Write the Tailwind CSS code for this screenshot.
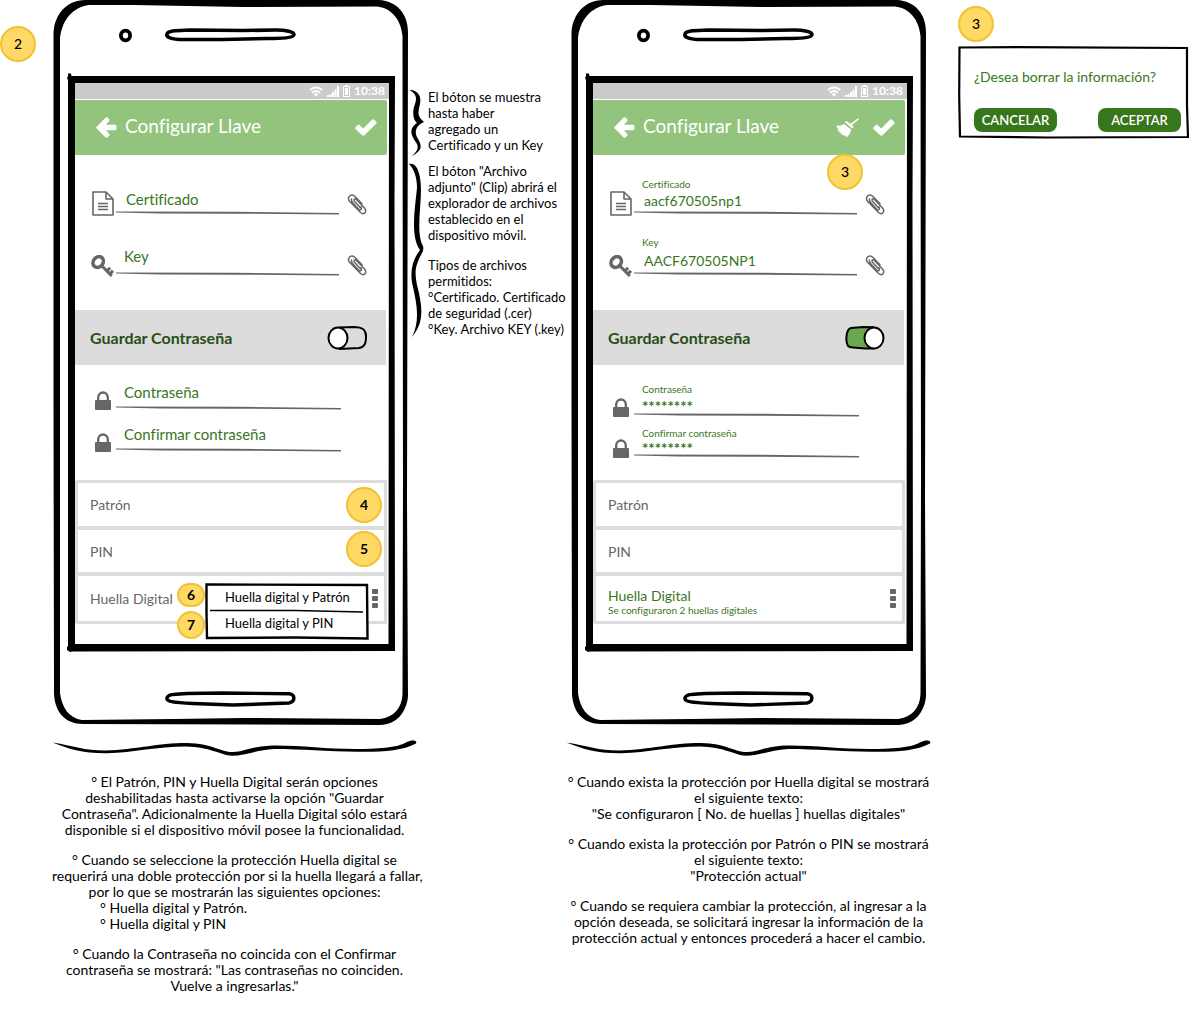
<!DOCTYPE html>
<html lang="es">
<head>
<meta charset="utf-8">
<meta name="viewport" content="width=device-width, initial-scale=1">
<title>Configurar Llave</title>
<script src="https://cdn.jsdelivr.net/npm/@tailwindcss/browser@4"></script>
</head>
<body class="bg-white font-['Lato',sans-serif] text-black [font-variant-ligatures:none]">

<!-- Shared drawings -->
<svg class="hidden" aria-hidden="true">
  <symbol id="frame" viewBox="0 0 356 726">
    <path fill="#000" fill-rule="evenodd" d="M0.500,32 C2,14 14,0 32,0 L326,0 C344,1 355,14 355,32 L354,500 L355,696 C354,711 344,725 327,725 L30,724 C12,724 2,712 1,694 L0.500,400 Z M7,38 L7,693 C9,708 16,718 29,720 L120,719 L190,718 L327,719 C341,717 349,708 349.500,694 L350,480 L349.500,36 C348,19 338,8 324,6.500 L190,7 L80,5 L36,5 C20,7 9,20 7,38 Z"/>
    <ellipse cx="72.500" cy="35.500" rx="4.600" ry="4.800" fill="none" stroke="#000" stroke-width="3.800"/>
    <path fill="none" stroke="#000" stroke-width="3.600" d="M114,34 C115,30 126,30.500 138,30 L190,30.500 L223,30 C233,30 241,32 241,34.500 C241,38 228,38.500 215,38.500 L170,39.500 L130,39.500 C118,39.500 113,37 114,34 Z"/>
    <path fill="none" stroke="#000" stroke-width="3.400" d="M114,698 C115,693.500 122,694.500 134,693.500 L170,693 L236,693.700 C243,695 242,702 236,703 L180,705 L140,703.500 C122,702.500 113,702 114,698 Z"/>
    <path fill="#000" fill-rule="evenodd" d="M14,78 L15,76 L15,73.500 L18,73.500 L18.500,76 L342,76 L342,79 L341.500,200 L342,651 L19,651.500 L17,652 L14,650 L14,647 L15,646 L15,80 Z M22,83 L22,644 L335.500,644 L336,83 Z"/>
  </symbol>
  <symbol id="brace-wide" viewBox="0 0 365 18">
    <path d="M0.500,2.500 C22,6 32,10.500 53,10.500 C85,9.500 105,3 135,3 C160,3.500 168,12 181,12 C193,12 200,5.500 224,5.500 C250,5.500 275,9 303,9 C325,9 345,8 355,2 C359,-0.500 366,0 364,3.500 C350,11 330,12 305,11.700 C275,11.700 250,9 222,9 C205,10 192,15.800 180,15.800 C168,15 158,6.800 134,6.500 C105,6.500 82,12.500 55,13.300 C30,13.500 17,9 0.500,2.500 Z"/>
  </symbol>
  <symbol id="line" viewBox="0 0 224 4" preserveAspectRatio="none">
    <path fill="#666" d="M0,0.500 L120,0.700 L224,2 L224,3.400 L120,2.700 L45,2.400 L0,1.500 Z"/>
  </symbol>
  <symbol id="wifi" viewBox="0 0 14 11">
    <path fill="none" stroke="#fff" stroke-width="2" d="M0.800,4 Q7,-1 13.200,4 M3,6.600 Q7,3.400 11,6.600"/><path fill="#fff" d="M4.600,8 Q7,6.200 9.400,8 L7,10.800 Z"/>
  </symbol>
  <symbol id="signal" viewBox="0 0 12 11">
    <path fill="#fff" d="M0,9h2v2H0z M2.500,8h2v3h-2z M5,6h2v5H5z M7.500,3.500h2v7.500h-2z M10,0h2v11h-2z"/>
  </symbol>
  <symbol id="battery" viewBox="0 0 7 12">
    <path fill="#fff" fill-rule="evenodd" d="M2,0h3v1h2v11H0V1h2z M1,2v9h5V2z M2,3h3v7H2z"/>
  </symbol>
  <symbol id="back" viewBox="0 0 21 21">
    <path fill="#fff" d="M0.400,10 L9.700,0.600 Q10.600,-0.200 11.500,0.600 L13.200,2.300 Q14,3.200 13.200,4.200 L9.800,7.700 H19 Q20.500,7.700 20.500,9.200 V11.700 Q20.500,13.200 19,13.200 H9.800 L13.200,16.800 Q14,17.800 13.200,18.700 L11.500,20.400 Q10.600,21.200 9.700,20.400 L0.400,11.200 Q-0.100,10.600 0.400,10 Z"/>
  </symbol>
  <symbol id="check" viewBox="0 0 22 17">
    <path fill="#fff" d="M0.400,8.500 L2.800,5.900 Q3.600,5.300 4.400,5.900 L8.300,9.500 L17.200,0.600 Q18,0 18.800,0.600 L21.400,3 Q22,3.800 21.400,4.500 L9.200,16.400 Q8.400,17 7.600,16.400 L0.400,9.900 Q-0.100,9.200 0.400,8.500 Z"/>
  </symbol>
  <symbol id="broom" viewBox="0 0 23 19">
    <path fill="#fff" d="M22,0.200 L23,1.300 L15.800,7.200 L17.600,9 L16.300,10.600 L8.800,4.300 L10.300,3 L13.300,4.900 L14.300,6 Z M8,6 L15,11.600 C14.800,14.500 13,17 11.500,18.700 L9.800,18.800 L10.300,17.200 L8,18.300 L7.900,16.800 L5.500,16.900 L5.500,15.200 L3.200,14.800 L3.500,13.200 L1.500,12.200 L2.200,10.600 L0,8.200 L2,7.500 C4.500,8 6.500,7.300 8,6 Z"/>
  </symbol>
  <symbol id="doc" viewBox="0 0 22 25">
    <path fill="none" stroke="#666" stroke-width="1.600" stroke-linejoin="round" d="M1,1H14L21,8V24H1Z M14,1V8H21"/><path fill="none" stroke="#666" stroke-width="1.400" d="M6,12.500H16M6,15.500H16M6,18.500H16"/>
  </symbol>
  <symbol id="key" viewBox="0 0 23 22">
    <ellipse cx="7.200" cy="7" rx="4.800" ry="5.800" transform="rotate(40 7.200 7)" fill="none" stroke="#666" stroke-width="3.600"/><path fill="none" stroke="#666" stroke-width="3" d="M10.500,10.500 L20.800,21 M15.800,15.800 L19.200,12.800 M18.800,18.800 L22,15.800"/>
  </symbol>
  <symbol id="clip" viewBox="0 0 20 22">
    <path fill="none" stroke="#666" stroke-width="1.500" stroke-linecap="round" d="M13.200,13.500 L7.500,7.200 C6,5.500 8,4 9.500,5.500 L17.500,14 C20.500,17.500 17,21.500 13.500,18.500 L2.800,7.500 C-0.500,4 3.500,-1 7.500,2 L15,9.800 M4.500,5 C4,7 5,8 6,9 L11.500,15 C13,16.500 15.500,15.500 14,13"/>
  </symbol>
  <symbol id="lock" viewBox="0 0 16 19">
    <path fill="none" stroke="#666" stroke-width="2.300" d="M3.200,10V6.500C3.200,-0.200 12.800,-0.200 12.800,6.500V10"/><rect y="9" width="16" height="10" rx="1" fill="#666"/>
  </symbol>
  <symbol id="dots" viewBox="0 0 6 19">
    <path fill="#666" d="M1,0h4a1,1 0 0 1 1,1v3a1,1 0 0 1-1,1H1a1,1 0 0 1-1-1V1a1,1 0 0 1 1-1z M1,7h4a1,1 0 0 1 1,1v3a1,1 0 0 1-1,1H1a1,1 0 0 1-1-1V8a1,1 0 0 1 1-1z M1,14h4a1,1 0 0 1 1,1v3a1,1 0 0 1-1,1H1a1,1 0 0 1-1-1v-3a1,1 0 0 1 1-1z"/>
  </symbol>
</svg>

<main class="grid grid-cols-[53px_356px_162px_356px_1fr] items-start">

  <div class="pt-[26px]">
    <span class="flex size-9 items-center justify-center rounded-full border-2 border-[#f1c232] bg-[#ffd966] text-sm font-medium">2</span>
  </div>

  <!-- Phone: empty form -->
  <section class="relative h-[726px] pt-[83px] pr-5 pl-[22px]">
    <svg class="pointer-events-none absolute inset-0 size-full" aria-hidden="true"><use href="#frame"/></svg>
    <div class="relative">
      <div class="flex h-4 items-center justify-end gap-1 bg-[#cbcbcb] pr-1 text-[12px] leading-4 font-bold text-white">
        <svg class="h-[11px] w-[14px]"><use href="#wifi"/></svg>
        <svg class="h-[11px] w-[12px]"><use href="#signal"/></svg>
        <svg class="h-[12px] w-[7px]"><use href="#battery"/></svg>
        <time>10:38</time>
      </div>
      <header class="mt-px mr-[2px] flex h-[55px] items-center rounded-r-xs bg-[#93c47d] pr-[10px] pl-[21px] text-white">
        <button aria-label="Volver"><svg class="size-[21px]"><use href="#back"/></svg></button>
        <h1 class="ml-2 flex-1 pb-1 text-[19px] leading-6">Configurar Llave</h1>
        <button aria-label="Guardar"><svg class="h-[17px] w-[22px]"><use href="#check"/></svg></button>
      </header>

      <div class="flex h-[61px] items-end pl-[17px]">
        <svg class="h-[25px] w-[22px]"><use href="#doc"/></svg>
        <div class="ml-[2px]">
          <input class="block h-6 w-[223px] pl-[10px] text-[15px] text-[#38761d] outline-none placeholder:text-[#38761d]" placeholder="Certificado" aria-label="Certificado">
          <svg class="mb-px h-1 w-[223px]"><use href="#line"/></svg>
        </div>
        <button class="ml-2" aria-label="Adjuntar certificado"><svg class="h-[22px] w-5"><use href="#clip"/></svg></button>
      </div>
      <div class="flex h-[61px] items-end pl-[16px]">
        <svg class="h-[22px] w-[23px]"><use href="#key"/></svg>
        <div class="ml-[2px]">
          <input class="mb-[4px] block h-6 w-[223px] pl-[8px] text-[15px] text-[#38761d] outline-none placeholder:text-[#38761d]" placeholder="Key" aria-label="Key">
          <svg class="mb-px h-1 w-[223px]"><use href="#line"/></svg>
        </div>
        <button class="ml-2" aria-label="Adjuntar key"><svg class="h-[22px] w-5"><use href="#clip"/></svg></button>
      </div>

      <div class="mt-[33px] mr-[3px] flex h-[55px] items-center justify-between bg-[#dcdcdc] pr-[19px] pl-[15px]">
        <label for="save-1" class="text-base font-bold text-[#274e13]">Guardar Contraseña</label>
        <span class="relative h-6 w-10">
          <input id="save-1" type="checkbox" class="absolute inset-0 size-full cursor-pointer appearance-none">
          <svg class="pointer-events-none absolute inset-0 size-full" viewBox="0 0 40 24" fill="none" stroke="#000" stroke-width="2" aria-hidden="true"><path d="M12,1.500 L27,1 C36,1 39,4 39,10 C39,17 38,21 32,22 L12,23 "/><ellipse cx="11" cy="12" rx="9.500" ry="10.500" fill="#fff"/></svg>
        </span>
      </div>

      <div class="mt-[17px] flex h-[28px] items-end pl-[20px]">
        <svg class="h-[19px] w-4"><use href="#lock"/></svg>
        <div class="ml-[5px]">
          <input class="mb-1 block h-5 w-[225px] pl-[8px] text-[15px] text-[#38761d] outline-none placeholder:text-[#38761d]" placeholder="Contraseña" aria-label="Contraseña">
          <svg class="h-1 w-[225px]"><use href="#line"/></svg>
        </div>
      </div>
      <div class="mt-[14px] flex h-[28px] items-end pl-[20px]">
        <svg class="h-[19px] w-4"><use href="#lock"/></svg>
        <div class="ml-[5px]">
          <input class="mb-1 block h-5 w-[225px] pl-[8px] text-[15px] text-[#38761d] outline-none placeholder:text-[#38761d]" placeholder="Confirmar contraseña" aria-label="Confirmar contraseña">
          <svg class="h-1 w-[225px]"><use href="#line"/></svg>
        </div>
      </div>

      <ul class="mt-[28px] mr-[2px] divide-y-4 divide-[#dcdcdc] rounded-xs border-3 border-[#dcdcdc] text-[14px] text-[#666]">
        <li class="relative flex h-[47px] items-center pl-3">Patrón
          <span class="absolute top-1 right-[2px] flex size-9 items-center justify-center rounded-full border-2 border-[#f1c232] bg-[#ffd966] text-sm font-bold text-black">4</span>
        </li>
        <li class="relative flex h-[46px] items-center pl-3">PIN
          <span class="absolute top-px right-[2px] flex size-9 items-center justify-center rounded-full border-2 border-[#f1c232] bg-[#ffd966] text-sm font-bold text-black">5</span>
        </li>
        <li class="relative flex h-[45px] items-center pr-[6px] pl-3">Huella Digital
          <button class="ml-auto" aria-label="Opciones"><svg class="h-[19px] w-[6px]"><use href="#dots"/></svg></button>
          <div class="absolute top-[7px] right-[15px] h-[57px] w-[164px] text-[13px] text-black">
            <svg class="absolute inset-0 size-full" viewBox="0 0 164 57" aria-hidden="true"><path d="M0,0.500 L164,1 L163,56.500 L0,56 Z" fill="#fff"/><path fill="none" stroke="#000" stroke-width="2.400" d="M1.500,1.500 L162,2 L162.500,55.500 L90,54.500 L2,55 L1.500,30 Z"/><path fill="none" stroke="#000" stroke-width="1.600" d="M5,27.500 L90,27.500 L158,29"/></svg>
            <div class="relative flex h-full flex-col pt-px pl-5 leading-[26px]">
              <a href="#" class="block">Huella digital y Patrón</a>
              <a href="#" class="block">Huella digital y PIN</a>
            </div>
          </div>
          <span class="absolute top-[7px] left-[99px] flex h-6 w-7 items-center justify-center rounded-full border-2 border-[#f1c232] bg-[#ffd966] text-sm font-bold text-black">6</span>
          <span class="absolute top-[35px] left-[99px] flex size-7 items-center justify-center rounded-full border-2 border-[#f1c232] bg-[#ffd966] text-sm font-bold text-black">7</span>
        </li>
      </ul>
    </div>
  </section>

  <!-- Margin notes -->
  <aside class="pt-[89px] text-[13px] leading-4">
    <div class="flex h-[67px] gap-[4px]">
      <svg class="h-[67px] w-[15px] shrink-0" viewBox="0 0 15 67" aria-hidden="true"><path d="M0,1 C8,0 13,7 11,15 C9,24 8,27 15,33 C8,36 4,42 9,50 C14,58 12,62 3,67 C10,61 10,57 6,52 C0,43 2,38 8,34 C4,31 3,22 6,15 C9,7 5,3 0,1 Z"/></svg>
      <p class="whitespace-nowrap">El bóton se muestra<br>hasta haber<br>agregado un<br>Certificado y un Key</p>
    </div>
    <div class="mt-[7px] flex gap-[4px]">
      <svg class="h-[175px] w-[15px] shrink-0" viewBox="0 0 15 175" aria-hidden="true"><path d="M0,1 C9,-1 12,14 12,27 C12,45 7,70 14,83 Q15,87 13,90 C5,105 6,110 8,122 C14,145 15,160 3,174 C11,158 8,142 4,124 C0,108 4,96 11,87 C1,73 6,45 8,25 C8,14 5,6 0,1 Z"/></svg>
      <div class="whitespace-nowrap">
        <p>El bóton "Archivo<br>adjunto" (Clip) abrirá el<br>explorador de archivos<br>establecido en el<br>dispositivo móvil.</p>
        <p class="mt-[14px]">Tipos de archivos<br>permitidos:<br>°Certificado. Certificado<br>de seguridad (.cer)<br>°Key. Archivo KEY (.key)</p>
      </div>
    </div>
  </aside>

  <!-- Phone: filled form -->
  <section class="relative h-[726px] pt-[83px] pr-5 pl-[22px]">
    <svg class="pointer-events-none absolute inset-0 size-full" aria-hidden="true"><use href="#frame"/></svg>
    <div class="relative">
      <div class="flex h-4 items-center justify-end gap-1 bg-[#cbcbcb] pr-1 text-[12px] leading-4 font-bold text-white">
        <svg class="h-[11px] w-[14px]"><use href="#wifi"/></svg>
        <svg class="h-[11px] w-[12px]"><use href="#signal"/></svg>
        <svg class="h-[12px] w-[7px]"><use href="#battery"/></svg>
        <time>10:38</time>
      </div>
      <header class="relative mt-px mr-[2px] flex h-[55px] items-center rounded-r-xs bg-[#93c47d] pr-[10px] pl-[21px] text-white">
        <button aria-label="Volver"><svg class="size-[21px]"><use href="#back"/></svg></button>
        <h1 class="ml-2 flex-1 pb-1 text-[19px] leading-6">Configurar Llave</h1>
        <button aria-label="Borrar información"><svg class="h-[19px] w-[23px]"><use href="#broom"/></svg></button>
        <button class="ml-[14px]" aria-label="Guardar"><svg class="h-[17px] w-[22px]"><use href="#check"/></svg></button>
        <span class="absolute top-[54px] right-[42px] flex size-9 items-center justify-center rounded-full border-2 border-[#f1c232] bg-[#ffd966] text-sm font-medium text-black">3</span>
      </header>

      <div class="flex h-[61px] items-end pl-[17px]">
        <svg class="h-[25px] w-[22px]"><use href="#doc"/></svg>
        <div class="ml-[2px]">
          <label for="cert" class="block pl-2 text-[10px] leading-3 text-[#38761d]">Certificado</label>
          <input id="cert" class="mb-px block h-5 w-[223px] pl-[10px] text-[14px] text-[#38761d] outline-none" value="aacf670505np1">
          <svg class="mb-px h-1 w-[223px]"><use href="#line"/></svg>
        </div>
        <button class="ml-2" aria-label="Adjuntar certificado"><svg class="h-[22px] w-5"><use href="#clip"/></svg></button>
      </div>
      <div class="flex h-[61px] items-end pl-[16px]">
        <svg class="h-[22px] w-[23px]"><use href="#key"/></svg>
        <div class="ml-[2px]">
          <label for="key-file" class="block pl-2 text-[10px] leading-3 text-[#38761d]">Key</label>
          <input id="key-file" class="block h-6 w-[223px] pl-[10px] text-[14px] text-[#38761d] outline-none" value="AACF670505NP1">
          <svg class="mb-px h-1 w-[223px]"><use href="#line"/></svg>
        </div>
        <button class="ml-2" aria-label="Adjuntar key"><svg class="h-[22px] w-5"><use href="#clip"/></svg></button>
      </div>

      <div class="mt-[33px] mr-[3px] flex h-[55px] items-center justify-between bg-[#dcdcdc] pr-[19px] pl-[15px]">
        <label for="save-2" class="text-base font-bold text-[#274e13]">Guardar Contraseña</label>
        <span class="relative h-6 w-10">
          <input id="save-2" type="checkbox" checked class="absolute inset-0 size-full cursor-pointer appearance-none">
          <svg class="pointer-events-none absolute inset-0 size-full" viewBox="0 0 40 24" stroke="#000" stroke-width="2" aria-hidden="true"><path fill="#6aa84f" d="M29,1.200 L18,1 L6,2 C2,3 1,10 1.500,15 C2,20 3,21 8,21.500 L20,22.500 L29,22.500"/><ellipse cx="29" cy="12" rx="9.500" ry="10.500" fill="#fff"/></svg>
        </span>
      </div>

      <div class="mt-[17px] flex h-[35px] items-end pl-[20px]">
        <svg class="h-[19px] w-4"><use href="#lock"/></svg>
        <div class="ml-[5px]">
          <label for="pass" class="block pl-2 text-[10px] leading-3 text-[#38761d]">Contraseña</label>
          <input id="pass" class="block h-[18px] w-[225px] pt-1 pl-2 text-[15px] font-bold text-[#38761d] outline-none" value="********">
          <svg class="h-1 w-[225px]"><use href="#line"/></svg>
        </div>
      </div>
      <div class="mt-[6px] flex h-[35px] items-end pl-[20px]">
        <svg class="h-[19px] w-4"><use href="#lock"/></svg>
        <div class="ml-[5px]">
          <label for="pass-2" class="block pl-2 text-[10px] leading-3 text-[#38761d]">Confirmar contraseña</label>
          <input id="pass-2" class="block h-[15px] w-[225px] pt-1 pl-2 text-[15px] font-bold text-[#38761d] outline-none" value="********">
          <svg class="h-1 w-[225px]"><use href="#line"/></svg>
        </div>
      </div>

      <ul class="mt-[22px] mr-[2px] divide-y-4 divide-[#dcdcdc] rounded-xs border-3 border-[#dcdcdc] text-[14px] text-[#666]">
        <li class="flex h-[47px] items-center pl-3">Patrón</li>
        <li class="flex h-[46px] items-center pl-3">PIN</li>
        <li class="flex h-[45px] items-center pr-[6px] pl-3 text-[#38761d]">
          <div class="pt-[6px]">
            <p class="leading-4">Huella Digital</p>
            <p class="text-[10px] leading-3">Se configuraron 2 huellas digitales</p>
          </div>
          <button class="ml-auto" aria-label="Opciones"><svg class="h-[19px] w-[6px]"><use href="#dots"/></svg></button>
        </li>
      </ul>
    </div>
  </section>

  <!-- Confirmation dialog -->
  <div class="pt-[6px] pl-[31px]">
    <span class="flex size-9 items-center justify-center rounded-full border-2 border-[#f1c232] bg-[#ffd966] text-sm font-medium">3</span>
    <div role="dialog" aria-label="Borrar información" class="relative mt-1 h-[93px] w-full max-w-[231px] px-4 pt-[22px]">
      <svg class="pointer-events-none absolute inset-0 size-full" viewBox="0 0 231 93" preserveAspectRatio="none" fill="none" stroke="#000" stroke-width="2.200" aria-hidden="true"><path d="M1.500,1.500 L60,1.200 L229,2 L229,60 L230,91 L90,91.500 L2,90.500 L1.200,50 Z"/></svg>
      <p class="text-[14px] leading-[18px] whitespace-nowrap text-[#38761d]">¿Desea borrar la información?</p>
      <div class="mt-[22px] mr-[-8px] flex justify-between">
        <button class="h-6 w-[83px] rounded-lg bg-[#38761d] text-[13px] leading-6 font-semibold text-white">CANCELAR</button>
        <button class="h-6 w-[83px] rounded-lg bg-[#38761d] text-[13px] leading-6 font-semibold text-white">ACEPTAR</button>
      </div>
    </div>
  </div>

  <!-- Notes under each phone -->
  <section class="col-span-2 col-start-2 row-start-2 -ml-px w-[365px] pt-[14px] text-center text-[14px] leading-4 whitespace-nowrap">
    <svg class="block h-[18px] w-full" aria-hidden="true"><use href="#brace-wide"/></svg>
    <p class="mt-4">° El Patrón, PIN y Huella Digital serán opciones<br>deshabilitadas hasta activarse la opción "Guardar<br>Contraseña". Adicionalmente la Huella Digital sólo estará<br>disponible si el dispositivo móvil posee la funcionalidad.</p>
    <p class="mt-[14px]">° Cuando se seleccione la protección Huella digital se<br>requerirá una doble protección por si la huella llegará a fallar,<br>por lo que se mostrarán las siguientes opciones:</p>
    <ul class="pl-12 text-left">
      <li>° Huella digital y Patrón.</li>
      <li>° Huella digital y PIN</li>
    </ul>
    <p class="mt-[14px]">° Cuando la Contraseña no coincida con el Confirmar<br>contraseña se mostrará: "Las contraseñas no coinciden.<br>Vuelve a ingresarlas."</p>
  </section>

  <section class="col-span-2 col-start-4 row-start-2 -ml-[5px] w-[365px] pt-[14px] text-center text-[14px] leading-4 whitespace-nowrap">
    <svg class="block h-[18px] w-full" aria-hidden="true"><use href="#brace-wide"/></svg>
    <p class="mt-4">° Cuando exista la protección por Huella digital se mostrará<br>el siguiente texto:<br>"Se configuraron [ No. de huellas ] huellas digitales"</p>
    <p class="mt-[14px]">° Cuando exista la protección por Patrón o PIN se mostrará<br>el siguiente texto:<br>"Protección actual"</p>
    <p class="mt-[14px]">° Cuando se requiera cambiar la protección, al ingresar a la<br>opción deseada, se solicitará ingresar la información de la<br>protección actual y entonces procederá a hacer el cambio.</p>
  </section>
</main>
</body>
</html>
